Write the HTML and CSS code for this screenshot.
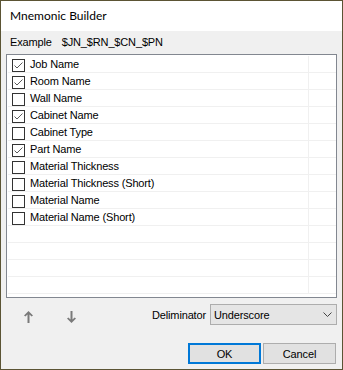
FILE: index.html
```html
<!DOCTYPE html>
<html lang="en">

<head>
    <meta charset="UTF-8" />
    <title>Mnemonic Builder</title>
    <link rel="stylesheet" href="styles.css">
</head>

<body>
    <div class="window">
        <div class="titlebar">Mnemonic Builder</div>

        <div class="content">
            <div class="example">
                <span>Example</span>
                <span class="example-value">$JN_$RN_$CN_$PN</span>
            </div>

            <div class="list" id="fieldList"></div>

            <div class="controls">
                <svg class="arrow up" width="9" height="12" viewBox="0 0 9 12">
                    <path d="M4.5 0 L9 4.5 L7.6 5.6 L5.5 3.6 V12 H3.5 V3.6 L1.4 5.6 L0 4.5 Z" />
                </svg>
                <svg class="arrow down" width="9" height="12" viewBox="0 0 9 12">
                    <path d="M4.5 12 L9 7.5 L7.6 6.4 L5.5 8.4 V0 H3.5 V8.4 L1.4 6.4 L0 7.5 Z" />
                </svg>
                <label class="delim-label">Deliminator</label>
                <div class="select">
                    <span>Underscore</span>
                    <svg width="9" height="5" viewBox="0 0 9 5">
                        <polyline points="0.5,0.5 4.5,4.5 8.5,0.5" fill="none" stroke="#444" />
                    </svg>
                </div>
            </div>

            <div class="buttons">
                <button class="btn default">OK</button>
                <button class="btn">Cancel</button>
            </div>
        </div>
    </div>

    <script>
        const fields = [
            { name: "Job Name", checked: true },
            { name: "Room Name", checked: true },
            { name: "Wall Name", checked: false },
            { name: "Cabinet Name", checked: true },
            { name: "Cabinet Type", checked: false },
            { name: "Part Name", checked: true },
            { name: "Material Thickness", checked: false },
            { name: "Material Thickness (Short)", checked: false },
            { name: "Material Name", checked: false },
            { name: "Material Name (Short)", checked: false }
        ];

        const list = document.getElementById("fieldList");
        const totalRows = 14;

        for (let i = 0; i < totalRows; i++) {
            const row = document.createElement("div");
            row.className = "row";
            const f = fields[i];
            if (f) {
                const mark = f.checked ? '<polyline points="2.5,6.5 5,9 10.5,3.5" fill="none" stroke="#5a5a5a" />' : '';
                row.innerHTML = `
            <span class="cell">
                <svg class="check" width="13" height="13" viewBox="0 0 13 13">
                    <rect x="0.5" y="0.5" width="12" height="12" fill="#fff" stroke="#333" />${mark}
                </svg>
                ${f.name}
            </span>
            <span class="cell-end"></span>`;
            } else {
                row.innerHTML = `<span class="cell"></span><span class="cell-end"></span>`;
            }
            list.appendChild(row);
        }
    </script>
</body>

</html>
```

FILE: styles.css
```css
* {
    box-sizing: border-box;
}

body {
    margin: 0;
    font-family: "Liberation Sans", Arial, sans-serif;
    font-size: 11px;
    letter-spacing: -0.15px;
    color: #000;
}

.window {
    width: 343px;
    height: 370px;
    border: 1px solid #5b5434;
    background: #f0f0f0;
    display: flex;
    flex-direction: column;
}

.titlebar {
    height: 30px;
    flex-shrink: 0;
    background: #fff;
    padding-left: 9px;
    padding-bottom: 1px;
    display: flex;
    align-items: center;
    font-family: Lato, "Noto Sans", sans-serif;
    font-size: 12px;
    letter-spacing: 0;
}

.content {
    padding: 0 5px;
}

.example {
    height: 23px;
    display: flex;
    align-items: center;
    padding-left: 4px;
    padding-bottom: 1px;
    gap: 10px;
}

.list {
    width: 331px;
    height: 244px;
    border: 1px solid #828790;
    background: #fff;
    padding: 1px 0 0 1px;
    overflow: hidden;
}

.row {
    display: flex;
    height: 17px;
    border-bottom: 1px solid #f0f0f0;
}

.cell {
    width: 301px;
    border-right: 1px solid #f0f0f0;
    display: flex;
    align-items: center;
    gap: 5px;
    padding-left: 4px;
    white-space: nowrap;
}

.cell-end {
    flex: 1;
}

.check {
    flex-shrink: 0;
    margin-top: 2px;
}

.controls {
    display: flex;
    align-items: center;
    margin-top: 6px;
    height: 21px;
}

.arrow {
    fill: #7a7a7a;
    margin-top: 4px;
}

.arrow.up {
    margin-left: 18px;
}

.arrow.down {
    margin-left: 34px;
}

.delim-label {
    margin-left: auto;
    margin-right: 4px;
}

.select {
    width: 127px;
    height: 21px;
    border: 1px solid #adadad;
    background: #e5e5e5;
    display: flex;
    align-items: center;
    justify-content: space-between;
    padding: 0 4px 0 3px;
}

.buttons {
    display: flex;
    justify-content: flex-end;
    gap: 2px;
    margin-top: 18px;
    padding-right: 1px;
}

.btn {
    width: 73px;
    height: 21px;
    border: 1px solid #adadad;
    background: #e1e1e1;
    font-family: inherit;
    font-size: 11px;
    letter-spacing: inherit;
    color: #000;
    padding: 0;
}

.btn.default {
    border: 2px solid #0078d7;
}
```
